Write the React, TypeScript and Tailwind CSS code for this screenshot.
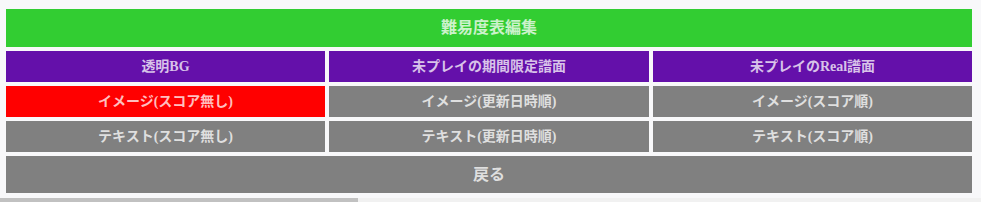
import React from "react";

const rows = [
  { label: "透明BG", bg: "bg-[#6410aa]" },
  { label: "未プレイの期間限定譜面", bg: "bg-[#6410aa]" },
  { label: "未プレイのReal譜面", bg: "bg-[#6410aa]" },
  { label: "イメージ(スコア無し)", bg: "bg-[#ff0000]" },
  { label: "イメージ(更新日時順)", bg: "bg-[#808080]" },
  { label: "イメージ(スコア順)", bg: "bg-[#808080]" },
  { label: "テキスト(スコア無し)", bg: "bg-[#808080]" },
  { label: "テキスト(更新日時順)", bg: "bg-[#808080]" },
  { label: "テキスト(スコア順)", bg: "bg-[#808080]" },
];

export default function App() {
  return (
    <div
      className="w-[981px] h-[202px] bg-[#f8f8fa] flex flex-col overflow-hidden"
      style={{ fontFamily: '"Liberation Serif", "Noto Sans CJK JP", serif' }}
    >
      <div className="flex-1 pl-[6px] pr-[9px] pt-[9px] flex flex-col gap-1">
        <div className="h-[38px] bg-[#32cd32] flex items-center justify-center text-[16px] font-bold text-white/75">
          難易度表編集
        </div>
        <div className="grid grid-cols-[319px_320px_319px] gap-1">
          {rows.map((r) => (
            <div
              key={r.label}
              className={`h-[31px] ${r.bg} flex items-center justify-center text-[14px] font-bold text-white/75`}
            >
              {r.label}
            </div>
          ))}
        </div>
        <div className="h-[37px] bg-[#808080] flex items-center justify-center text-[16px] font-bold text-white/75">
          戻る
        </div>
      </div>
      <div className="h-[4px] bg-[#f1f1f1] flex">
        <div className="w-[358px] bg-[#c1c1c1]" />
      </div>
    </div>
  );
}
